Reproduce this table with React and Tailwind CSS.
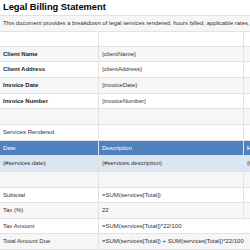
import React from "react";

const font = { fontFamily: '"Liberation Sans", Arial, sans-serif' };

// One sheet row: cells laid out in a flex row; a flex-1 cell covers the remaining width.
function Row({ h, bg = "bg-white", children }) {
  return (
    <div className={`flex w-full shrink-0 ${h} ${bg}`}>{children}</div>
  );
}

function Cell({ w, children, className = "", noRight = false }) {
  return (
    <div
      className={`box-border flex items-center overflow-visible whitespace-nowrap border-b border-[#e2e2e2] px-[3px] ${
        noRight ? "" : "border-r"
      } ${w} ${className}`}
    >
      {children}
    </div>
  );
}

export default function App() {
  const A = "w-[99px] shrink-0";
  const B = "w-[145px] shrink-0";
  const C = "flex-1 min-w-0";
  const label = "font-bold text-[6px] text-[#222]";
  const val = "text-[6px] text-[#333]";
  const gray = "bg-[#f6f6f6]";

  return (
    <div style={font} className="flex h-[250px] w-[250px] flex-col overflow-hidden bg-white">
      <Row h="h-[16px]">
        <Cell w="flex-1" noRight className="text-[9.3px] font-bold text-black">
          Legal Billing Statement
        </Cell>
      </Row>
      <Row h="h-[16px]" bg={gray}>
        <Cell w="flex-1" noRight className="text-[5.9px] text-[#333]">
          This document provides a breakdown of legal services rendered, hours billed, applicable rates, and the total amount due.
        </Cell>
      </Row>
      <Row h="h-[15px]">
        <Cell w={A} />
        <Cell w={B} />
        <Cell w={C} noRight />
      </Row>
      <Row h="h-[15px]" bg={gray}>
        <Cell w={A} className={label}>Client Name</Cell>
        <Cell w={B} className={val}>{"{clientName}"}</Cell>
        <Cell w={C} noRight />
      </Row>
      <Row h="h-[16px]">
        <Cell w={A} className={label}>Client Address</Cell>
        <Cell w={B} className={val}>{"{clientAddress}"}</Cell>
        <Cell w={C} noRight />
      </Row>
      <Row h="h-[16px]" bg={gray}>
        <Cell w={A} className={label}>Invoice Date</Cell>
        <Cell w={B} className={val}>{"{invoiceDate}"}</Cell>
        <Cell w={C} noRight />
      </Row>
      <Row h="h-[15px]">
        <Cell w={A} className={label}>Invoice Number</Cell>
        <Cell w={B} className={val}>{"{invoiceNumber}"}</Cell>
        <Cell w={C} noRight />
      </Row>
      <Row h="h-[16px]" bg={gray}>
        <Cell w={A} />
        <Cell w={B} />
        <Cell w={C} noRight />
      </Row>
      <Row h="h-[16px]">
        <Cell w={A} className={val}>Services Rendered</Cell>
        <Cell w={B} />
        <Cell w={C} noRight />
      </Row>
      <Row h="h-[15px]" bg="bg-[#4f81bd]">
        <Cell w={A} className="border-[#7fa2cf] text-[6px] text-white">Date</Cell>
        <Cell w={B} className="border-[#7fa2cf] text-[6px] text-white">Description</Cell>
        <Cell w={C} noRight className="border-[#7fa2cf] text-[6px] font-bold text-white">Hours</Cell>
      </Row>
      <Row h="h-[16px]" bg="bg-[#dce6f1]">
        <Cell w={A} className={val}>{"{#services.date}"}</Cell>
        <Cell w={B} className={val}>{"{#services.description}"}</Cell>
        <Cell w={C} noRight className={val}>{"{#services.hours}"}</Cell>
      </Row>
      <Row h="h-[16px]" bg={gray}>
        <Cell w={A} />
        <Cell w={B} />
        <Cell w={C} noRight />
      </Row>
      <Row h="h-[15px]">
        <Cell w={A} className={val}>Subtotal</Cell>
        <Cell w={B} className={val}>=SUM(services[Total])</Cell>
        <Cell w={C} noRight />
      </Row>
      <Row h="h-[16px]" bg={gray}>
        <Cell w={A} className={val}>Tax (%)</Cell>
        <Cell w={B} className={val}>22</Cell>
        <Cell w={C} noRight />
      </Row>
      <Row h="h-[15px]">
        <Cell w={A} className={val}>Tax Amount</Cell>
        <Cell w="flex-1" noRight className={val}>=SUM(services[Total])*22/100</Cell>
      </Row>
      <Row h="h-[16px]" bg={gray}>
        <Cell w={A} className={val}>Total Amount Due</Cell>
        <Cell w="flex-1" noRight className={val}>
          =SUM(services[Total]) + SUM(services[Total])*22/100
        </Cell>
      </Row>
    </div>
  );
}
